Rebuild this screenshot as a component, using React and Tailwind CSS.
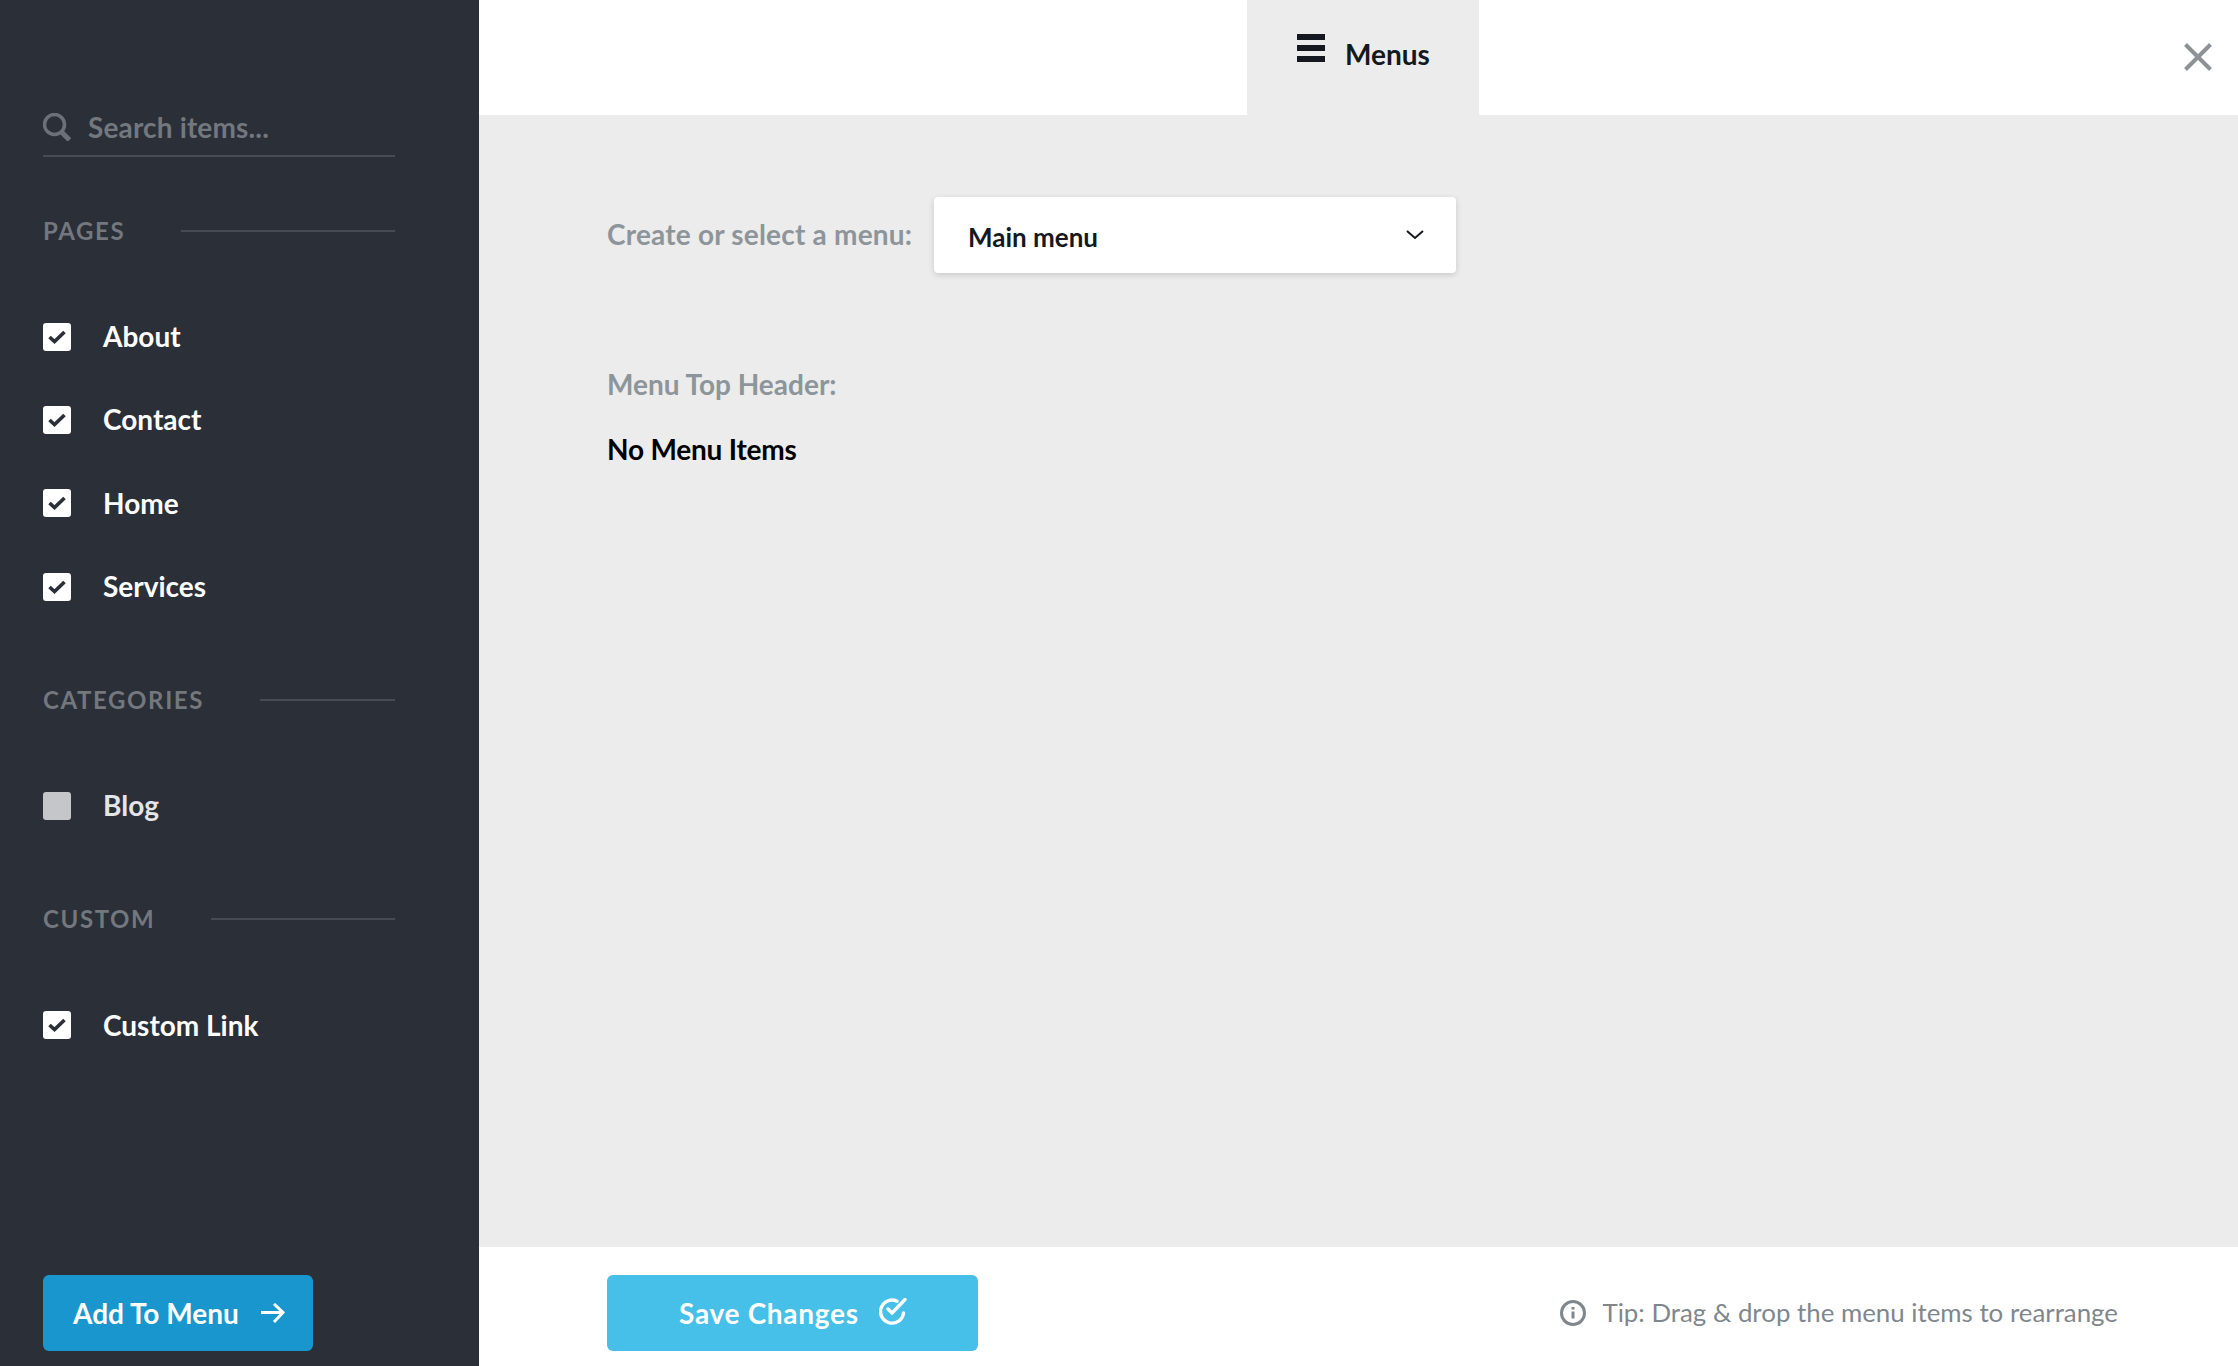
const SECTIONS = [
  { title: 'PAGES', items: [{ label: 'About', on: true }, { label: 'Contact', on: true }, { label: 'Home', on: true }, { label: 'Services', on: true }] },
  { title: 'CATEGORIES', items: [{ label: 'Blog', on: false }] },
  { title: 'CUSTOM', items: [{ label: 'Custom Link', on: true }] },
];

const font = "font-['Lato','Liberation_Sans',sans-serif]";

function Checkbox({ on }) {
  if (!on) return <span className="w-[28px] h-[28px] rounded-[3px] bg-[#c4c6c9] shrink-0" />;
  return (
    <span className="w-[28px] h-[28px] rounded-[3px] bg-white shrink-0 flex items-center justify-center">
      <svg className="w-[28px] h-[28px]" viewBox="0 0 28 28" fill="none" stroke="#2b2f38" strokeWidth={3.6}>
        <path d="M6.5 14l5 4.6 10-9.6" />
      </svg>
    </span>
  );
}

function Section({ title, items, first }) {
  return (
    <section className={first ? 'mt-[60px]' : 'mt-[58px]'}>
      <div className="h-[28px] flex items-center gap-[56px]">
        <h3 className="text-[24px] leading-[28px] font-bold tracking-[1.6px] text-[#73777e]">{title}</h3>
        <span className="flex-1 h-[2px] bg-[#474b54]" />
      </div>
      <ul className="mt-[50px]">
        {items.map((it) => (
          <li key={it.label} className="h-[83.3px] flex items-center gap-[32px]">
            <Checkbox on={it.on} />
            <span className={`text-[28px] font-bold -mt-[1px] ${it.on ? 'text-white' : 'text-[#e4e5e7]'}`}>{it.label}</span>
          </li>
        ))}
      </ul>
    </section>
  );
}

function Sidebar() {
  return (
    <aside className="w-[479px] shrink-0 bg-[#2b2f38] flex flex-col pl-[43px] pr-[84px]">
      <div className="mt-[108px] h-[49px] border-b-2 border-[#474b54] flex items-center gap-[17px] pb-[6px]">
        <svg className="w-[28px] h-[28px] shrink-0 -mt-[3px]" viewBox="0 0 28 28" fill="none" stroke="#6c7178">
          <circle cx="11.5" cy="11.5" r="10" strokeWidth={3.5} />
          <path d="M18 18.5l8.5 8.5" strokeWidth={5} />
        </svg>
        <span className="text-[28px] font-bold tracking-[0.15px] text-[#73777e] -mt-[3px]">Search items...</span>
      </div>
      {SECTIONS.map((s, i) => (
        <Section key={s.title} title={s.title} items={s.items} first={i === 0} />
      ))}
      <button className="mt-auto mb-[15px] w-[270px] h-[76px] rounded-[6px] bg-[#1896cd] flex items-center pl-[30px] gap-[22px] text-white text-[28px] font-bold">
        Add To Menu
        <svg className="w-[24px] h-[20px]" viewBox="0 0 24 20" fill="none" stroke="#fff" strokeWidth={3}>
          <path d="M0 9.5h22M13 1l9 8.5-9 9.5" />
        </svg>
      </button>
    </aside>
  );
}

export default function App() {
  return (
    <div className={`w-[2238px] h-[1366px] flex overflow-hidden ${font}`}>
      <Sidebar />
      <main className="flex-1 flex flex-col min-w-0">
        <header className="h-[115px] shrink-0 bg-white flex pl-[768px] pr-[26px]">
          <div className="w-[232px] bg-[#ececec] flex pl-[50px] pt-[34px] gap-[20px]">
            <svg className="w-[28px] h-[28px]" viewBox="0 0 28 28" fill="#15191f">
              <rect y="0" width="28" height="6" />
              <rect y="11" width="28" height="6" />
              <rect y="22" width="28" height="6" />
            </svg>
            <span className="text-[28px] leading-[40px] font-bold text-[#15191f]">Menus</span>
          </div>
          <div className="ml-auto self-center -mt-[1px]">
            <svg className="w-[28px] h-[28px]" viewBox="0 0 28 28" fill="none" stroke="#8e9296" strokeWidth={4}>
              <path d="M1.5 1.5l25 25M26.5 1.5l-25 25" />
            </svg>
          </div>
        </header>

        <div className="flex-1 bg-[#ececec] pl-[128px] pt-[82px]">
          <div className="flex items-center">
            <span className="w-[327px] shrink-0 text-[28px] font-bold tracking-[0.2px] text-[#8e959a] -mt-[2px]">Create or select a menu:</span>
            <div className="w-[522px] h-[76px] rounded-[4px] bg-white shadow-[0_2px_6px_rgba(0,0,0,0.15)] flex items-center justify-between pl-[34px] pr-[32px]">
              <span className="text-[26px] font-bold text-[#15191f] mt-[4px]">Main menu</span>
              <svg className="w-[18px] h-[12px]" viewBox="0 0 18 12" fill="none" stroke="#15191f" strokeWidth={2}>
                <path d="M1 2l8 7 8-7" />
              </svg>
            </div>
          </div>
          <p className="mt-[91px] text-[28px] leading-[40px] font-bold text-[#8e959a]">Menu Top Header:</p>
          <p className="mt-[25px] text-[28px] leading-[40px] font-bold tracking-[-0.2px] text-black">No Menu Items</p>
        </div>

        <footer className="h-[119px] shrink-0 bg-white flex items-center justify-between pt-[13px] pl-[128px] pr-[120px]">
          <button className="w-[371px] h-[76px] rounded-[6px] bg-[#46bfe9] flex items-center pl-[72px] gap-[20px] text-white text-[28px] font-bold tracking-[0.7px]">
            Save Changes
            <svg className="w-[28px] h-[28px] -mt-[2px]" viewBox="0 0 28 28" fill="none" stroke="#fff" strokeWidth={3.4} strokeLinecap="round" strokeLinejoin="round">
              <path d="M18 3.2A11.5 11.5 0 1 0 24.5 15" />
              <path d="M9 11l4 4L26 1.5" />
            </svg>
          </button>
          <div className="flex items-center gap-[16px] text-[25.85px] text-[#7f878d]">
            <svg className="w-[26px] h-[26px]" viewBox="0 0 26 26" fill="none" stroke="#7f878d" strokeWidth={3}>
              <circle cx="13" cy="13" r="11.5" />
              <path d="M13 11.5v7" />
              <path d="M13 7v2.5" />
            </svg>
            <span className="-mt-[1px]">Tip: Drag &amp; drop the menu items to rearrange</span>
          </div>
        </footer>
      </main>
    </div>
  );
}
